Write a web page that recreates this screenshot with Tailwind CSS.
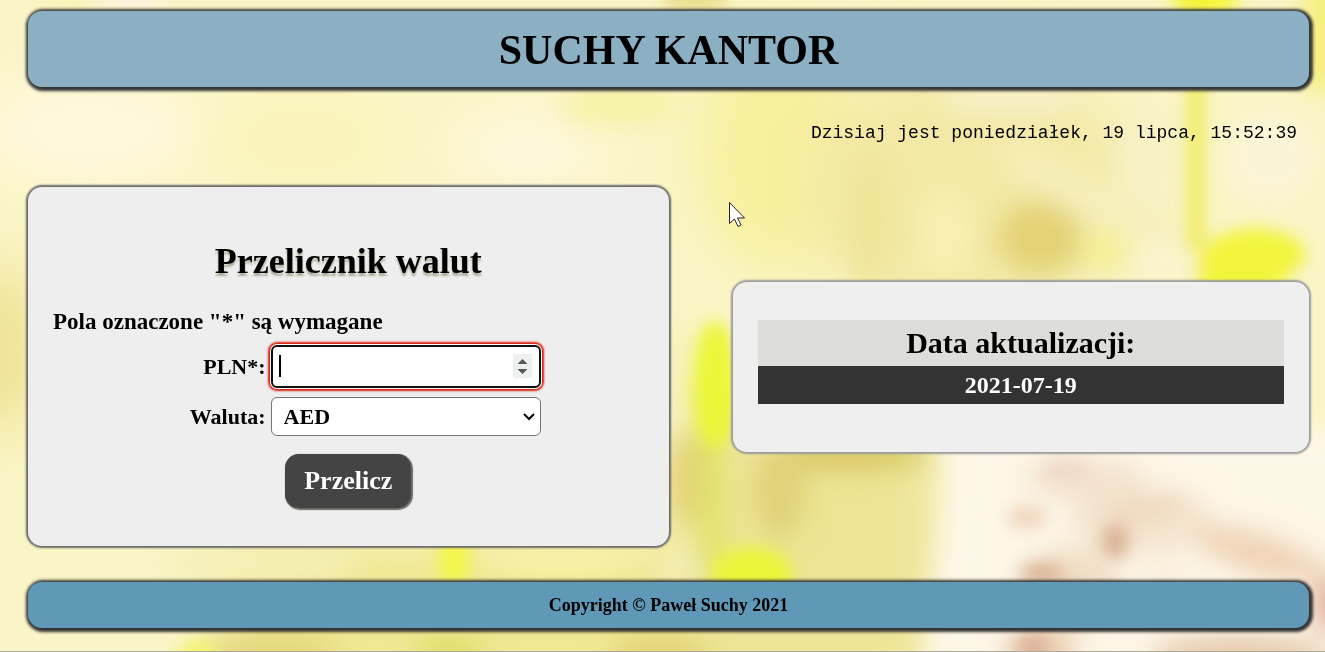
<!DOCTYPE html>
<html lang="pl">
<head>
<meta charset="utf-8">
<meta name="viewport" content="width=device-width, initial-scale=1">
<title>Suchy Kantor</title>
<script src="https://cdn.jsdelivr.net/npm/@tailwindcss/browser@4"></script>
</head>
<body class="relative min-h-screen overflow-x-hidden border-b border-[#aaa99b] bg-[#faf5c8] pt-[11px] pr-4 pb-5 pl-7 font-['Liberation_Serif',serif] font-bold text-black">

<!-- blurred garden backdrop -->
<svg class="absolute inset-0 -z-10 h-full w-full" viewBox="0 0 1325 652" preserveAspectRatio="none" aria-hidden="true">
  <defs>
    <filter id="b30" filterUnits="userSpaceOnUse" x="-100" y="-100" width="1525" height="852"><feGaussianBlur stdDeviation="28"/></filter>
    <filter id="b14" filterUnits="userSpaceOnUse" x="-100" y="-100" width="1525" height="852"><feGaussianBlur stdDeviation="13"/></filter>
    <filter id="b7" filterUnits="userSpaceOnUse" x="-100" y="-100" width="1525" height="852"><feGaussianBlur stdDeviation="8"/></filter>
  </defs>
  <rect width="1325" height="652" fill="#faf5c6"/>
  <g filter="url(#b30)">
    <ellipse cx="90" cy="130" rx="110" ry="60" fill="#fef8dc"/>
    <ellipse cx="300" cy="140" rx="100" ry="50" fill="#faf4ba"/>
    <ellipse cx="530" cy="150" rx="80" ry="40" fill="#fdf8dc"/>
    <ellipse cx="780" cy="150" rx="80" ry="120" fill="#f7f09c"/>
    <ellipse cx="970" cy="190" rx="170" ry="130" fill="#f3e9a6"/>
    <ellipse cx="0" cy="350" rx="30" ry="90" fill="#ecdc84"/>
    <rect x="230" y="540" width="700" height="150" fill="#f0e792"/>
    <rect x="690" y="430" width="250" height="260" fill="#ede495"/>
  </g>
  <g filter="url(#b14)">
    <ellipse cx="620" cy="105" rx="60" ry="20" fill="#f7f1a4"/>
    <ellipse cx="1110" cy="210" rx="130" ry="22" fill="#f6eeba" transform="rotate(30 1110 210)"/>
    <ellipse cx="870" cy="220" rx="22" ry="70" fill="#efe598"/>
    <ellipse cx="945" cy="235" rx="28" ry="45" fill="#f7efb0"/>
    <ellipse cx="1040" cy="238" rx="42" ry="36" fill="#e3d175"/>
    <ellipse cx="1105" cy="250" rx="20" ry="18" fill="#f5f090"/>
    <ellipse cx="1165" cy="258" rx="28" ry="20" fill="#faf4d0"/>
    <ellipse cx="1010" cy="95" rx="70" ry="20" fill="#f8f0c8"/>
    <ellipse cx="1150" cy="160" rx="30" ry="50" fill="#f7f1c6"/>
    <rect x="1305" y="-20" width="60" height="110" fill="#f5ef78"/>
    <ellipse cx="1270" cy="158" rx="46" ry="46" fill="#faf4d6"/>
    <ellipse cx="850" cy="455" rx="80" ry="14" fill="#d6c35c"/>
    <ellipse cx="780" cy="490" rx="26" ry="50" fill="#e0d178"/>
    <rect x="670" y="330" width="18" height="110" fill="#f5efb0"/>
    <ellipse cx="685" cy="480" rx="18" ry="50" fill="#e4d278"/>
    <rect x="700" y="390" width="26" height="190" fill="#e0e268"/>
    <ellipse cx="260" cy="565" rx="100" ry="18" fill="#f5efb8"/>
    <ellipse cx="560" cy="562" rx="80" ry="14" fill="#f7f2a8"/>
    <ellipse cx="680" cy="568" rx="24" ry="12" fill="#f5efc0"/>
    <ellipse cx="270" cy="655" rx="70" ry="20" fill="#e4d67a"/>
    <ellipse cx="450" cy="655" rx="35" ry="20" fill="#dfdf6c"/>
    <ellipse cx="660" cy="655" rx="50" ry="18" fill="#e2d174"/>
  </g>
  <g filter="url(#b7)">
    <ellipse cx="65" cy="-2" rx="22" ry="8" fill="#f8f2b0"/>
    <ellipse cx="135" cy="-2" rx="34" ry="9" fill="#fbf2e6"/>
    <ellipse cx="695" cy="0" rx="35" ry="8" fill="#e5d678"/>
    <rect x="1187" y="-20" width="18" height="270" fill="#f0ec66"/>
    <ellipse cx="1205" cy="0" rx="34" ry="14" fill="#f4f430"/>
    <ellipse cx="1255" cy="255" rx="50" ry="26" fill="#f3f43c"/>
    <rect x="1200" y="252" width="85" height="45" fill="#f3f43c"/>
    <ellipse cx="715" cy="385" rx="22" ry="64" fill="#ebf638"/>
    <ellipse cx="752" cy="574" rx="40" ry="26" fill="#eaf638"/>
    <ellipse cx="454" cy="560" rx="16" ry="28" fill="#f3f648"/>
    <ellipse cx="198" cy="655" rx="20" ry="12" fill="#f4f468"/>
  </g>
  <!-- pale fur in the lower right corner -->
  <path d="M945 430H1400V700H915Q945 560 945 430Z" fill="#fdf7e8" filter="url(#b14)"/>
  <g filter="url(#b14)">
    <ellipse cx="1085" cy="480" rx="60" ry="20" fill="#f3e1cc"/>
    <ellipse cx="1140" cy="520" rx="70" ry="34" fill="#f4e3cd"/>
    <ellipse cx="1260" cy="555" rx="70" ry="20" fill="#efd2b4" transform="rotate(18 1260 555)"/>
    <ellipse cx="1070" cy="590" rx="50" ry="40" fill="#f0dcc2"/>
    <ellipse cx="1165" cy="580" rx="28" ry="24" fill="#f9f0de"/>
    <ellipse cx="1040" cy="650" rx="36" ry="16" fill="#e5c3a4"/>
    <ellipse cx="1240" cy="655" rx="90" ry="16" fill="#e3c2a4"/>
    <ellipse cx="1330" cy="605" rx="14" ry="30" fill="#dba48e"/>
  </g>
  <g filter="url(#b7)">
    <ellipse cx="1027" cy="518" rx="20" ry="12" fill="#f0d6bd"/>
    <ellipse cx="1065" cy="470" rx="24" ry="9" fill="#efd8c6"/>
    <path d="M1110 505Q1160 495 1190 505Q1150 525 1120 530Z" fill="#f1dabf"/>
    <ellipse cx="1115" cy="542" rx="14" ry="18" fill="#dab498"/>
    <ellipse cx="1042" cy="574" rx="22" ry="9" fill="#d8b093"/>
    <ellipse cx="1033" cy="648" rx="16" ry="12" fill="#dcb19a"/>
  </g>
</svg>

<header class="rounded-[14px] bg-[#8bb0c4] px-6 pt-[9px] pb-[7px] text-center shadow-[1px_1px_3px_3px_#333]">
  <h1 class="text-[42px] leading-[60px]">SUCHY KANTOR</h1>
</header>

<p class="mt-[34px] pr-3 text-right font-['Liberation_Mono',monospace] text-[18px] leading-6 font-normal">Dzisiaj jest poniedziałek, 19 lipca, 15:52:39</p>

<main class="mt-[42px] flex items-center justify-between">
  <form class="w-1/2 rounded-[14px] bg-[#eee] px-[25px] pt-[54px] pb-[38px] shadow-[0_0_2px_2px_#666]">
    <h2 class="text-center text-[36px] leading-10 text-shadow-[0_3px_2px_#77775588]">Przelicznik walut</h2>
    <p class="mt-[29px] text-[23px] leading-6">Pola oznaczone "*" są wymagane</p>

    <div class="mt-[11px] flex items-center gap-[5px]">
      <label for="amount" class="w-[36%] text-right text-[22px] leading-6">PLN*:</label>
      <div class="relative w-[270px]">
        <input id="amount" type="number" required class="block h-[43px] w-full appearance-none rounded-md border-2 border-[#101010] bg-white px-2 text-[22px] outline-none shadow-[0_0_0_1px_#fff,0_0_2px_3px_#dc2010] [&::-webkit-inner-spin-button]:appearance-none">
        <span class="absolute top-[10px] left-2 h-[22px] w-0.5 bg-black"></span>
        <svg class="absolute top-[9px] right-[9px] h-6 w-[19px] bg-[#efefef]" viewBox="0 0 19 24" fill="#505a58" aria-hidden="true"><path d="M9.500 5L14.500 10H4.500ZM9.500 20L14.500 15H4.500Z"/></svg>
      </div>
    </div>

    <div class="mt-[9px] flex items-center gap-[5px]">
      <label for="currency" class="w-[36%] text-right text-[22px] leading-6">Waluta:</label>
      <div class="relative w-[270px]">
        <select id="currency" class="block h-[39px] w-full appearance-none rounded-md border border-[#767676] bg-white px-3 text-[22px] font-bold">
          <option>AED</option>
        </select>
        <svg class="pointer-events-none absolute top-4 right-1.5 h-2 w-3" viewBox="0 0 12 8" fill="none" stroke="#000" stroke-width="2" aria-hidden="true"><path d="M1 1L6 6L11 1"/></svg>
      </div>
    </div>

    <div class="mt-[18px] flex justify-center">
      <button type="submit" class="h-[54px] rounded-[14px] bg-[#444] px-[19px] text-[26px] leading-8 text-white shadow-[1px_1px_1px_1px_#6c6c64]">Przelicz</button>
    </div>
  </form>

  <section class="w-[45%] rounded-[14px] bg-[#efefef] px-[25px] pt-[38px] pb-12 shadow-[0_0_2px_2px_#999]">
    <table class="w-full border-collapse text-center">
      <thead>
        <tr><th class="h-[46px] bg-[#ddddda] p-0 text-[30px] leading-9">Data aktualizacji:</th></tr>
      </thead>
      <tbody>
        <tr><td class="h-[38px] bg-[#333] p-0 text-2xl leading-8 text-white">2021-07-19</td></tr>
      </tbody>
    </table>
  </section>
</main>

<footer class="mt-9 rounded-[14px] bg-[#5f99b7] px-6 py-[11px] text-center text-[18px] leading-6 shadow-[1px_1px_3px_3px_#333]">Copyright © Paweł Suchy 2021</footer>

<!-- mouse pointer -->
<svg class="absolute top-[202px] left-[729px] h-[26px] w-[17px]" viewBox="0 0 17 26" fill="#fff" stroke="#222" stroke-width="1" aria-hidden="true"><path d="M.5 .5V21.500L5.500 17L9 24.500L12 23L8.500 16H15.500Z"/></svg>
</body>
</html>
